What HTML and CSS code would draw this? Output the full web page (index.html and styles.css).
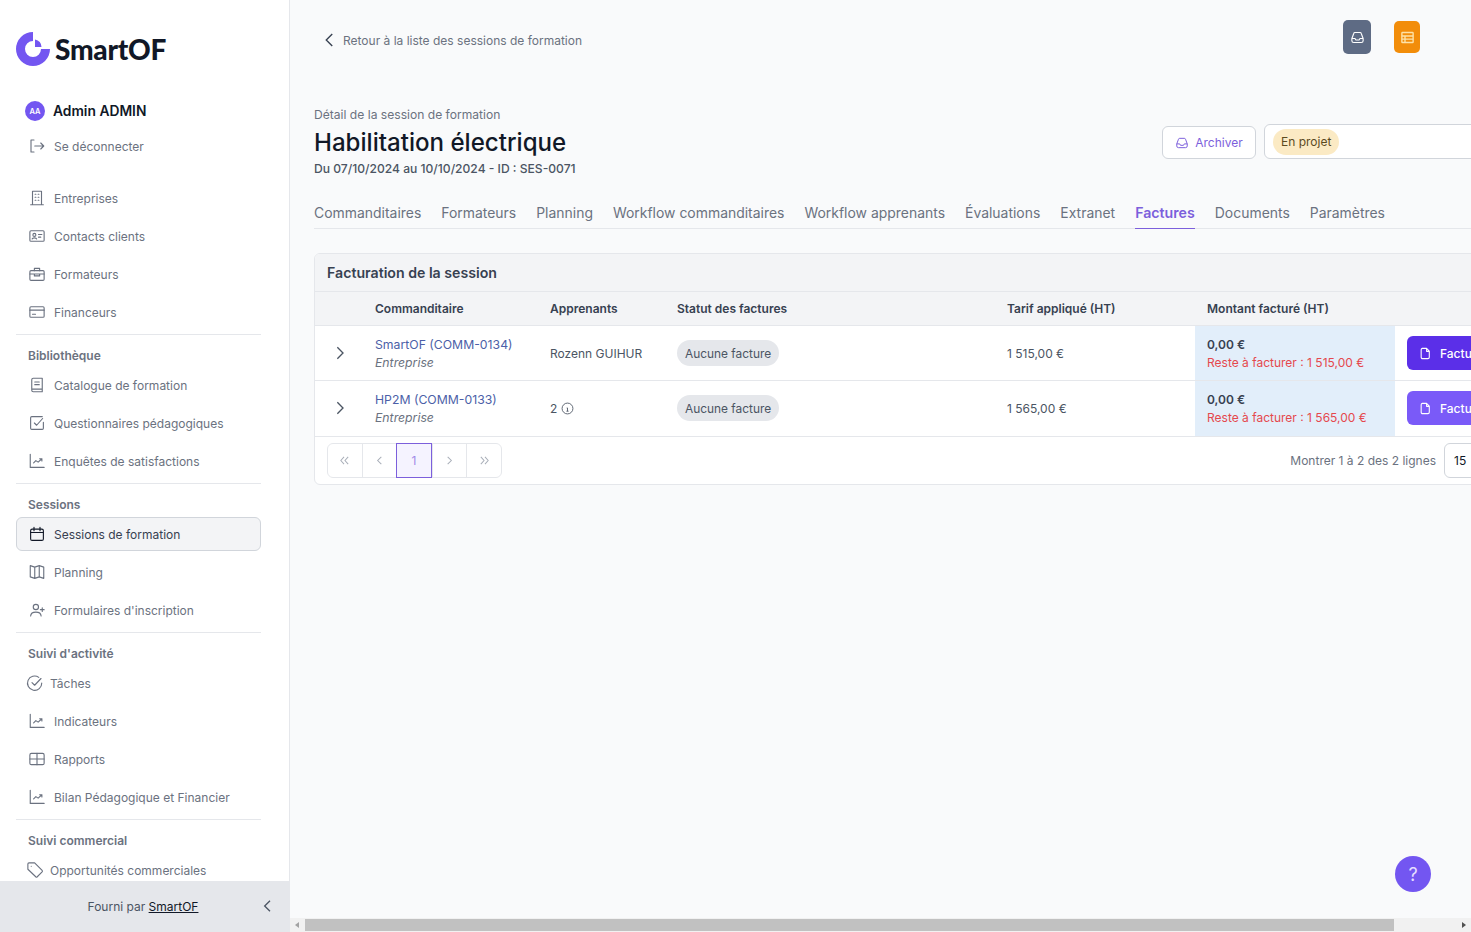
FILE: index.html
```html
<!DOCTYPE html>
<html lang="fr">
<head>
<meta charset="utf-8">
<title>Habilitation électrique</title>
<link rel="stylesheet" href="styles.css">
</head>
<body>
<aside class="sidebar">
  <div class="side-scroll">
    <div class="logo">
      <svg width="36" height="36" viewBox="0 0 36 36"><path d="M18 1a17 17 0 1 0 17 17h-9a8 8 0 1 1-8-8z" fill="#7356f1"/><path d="M20 8.500a8 8 0 0 1 6.500 7.500H20z" fill="#7356f1"/></svg>
      <span class="logo-text">SmartOF</span>
    </div>
    <div class="user"><span class="avatar">AA</span><span class="user-name">Admin ADMIN</span></div>
    <a class="item logout"><svg class="ic" viewBox="0 0 24 24"><path d="M8 4H4v16h4M9 12h12M17 8l4 4-4 4"/></svg><span>Se déconnecter</span></a>
    <nav class="group first">
      <a class="item"><svg class="ic" viewBox="0 0 24 24"><path d="M6 21V3h12v18M3.500 21h17M9.500 7h1M13.500 7h1M9.500 11h1M13.500 11h1M9.500 15h1M13.500 15h1"/></svg><span>Entreprises</span></a>
      <a class="item"><svg class="ic" viewBox="0 0 24 24"><rect x="2.500" y="5" width="19" height="14" rx="1.500"/><circle cx="8.500" cy="10.500" r="2"/><path d="M5.500 16c.5-2 5.500-2 6 0M14 10h4.500M14 13.500h3"/></svg><span>Contacts clients</span></a>
      <a class="item"><svg class="ic" viewBox="0 0 24 24"><rect x="2.500" y="7.500" width="19" height="13" rx="1.500"/><path d="M8.500 7.500V4.500h7v3M2.500 12h19M8.500 12v2.500h7V12"/></svg><span>Formateurs</span></a>
      <a class="item"><svg class="ic" viewBox="0 0 24 24"><rect x="2.500" y="5" width="19" height="14" rx="1.500"/><path d="M2.500 9.500h19M6 15h4"/></svg><span>Financeurs</span></a>
    </nav>
    <nav class="group">
      <h3 class="group-title">Bibliothèque</h3>
      <a class="item"><svg class="ic" viewBox="0 0 24 24"><path d="M5 19V5a2 2 0 0 1 2-2h12v18H7a2 2 0 0 1-2-2zM5 17.500h14M9 8h6M9 11.500h6"/></svg><span>Catalogue de formation</span></a>
      <a class="item"><svg class="ic" viewBox="0 0 24 24"><path d="M20.500 11v8a1.500 1.500 0 0 1-1.500 1.500H5A1.500 1.500 0 0 1 3.500 19V5A1.500 1.500 0 0 1 5 3.500h14M8.500 12l3 3 8-9"/></svg><span>Questionnaires pédagogiques</span></a>
      <a class="item"><svg class="ic" viewBox="0 0 24 24"><path d="M3 3v17.500h18.500M7.500 14.500l3-3 3 2 5-4.500M15.500 9h3v3"/></svg><span>Enquêtes de satisfactions</span></a>
    </nav>
    <nav class="group">
      <h3 class="group-title">Sessions</h3>
      <a class="item active"><svg class="ic dark" viewBox="0 0 24 24"><rect x="3.500" y="5.500" width="17" height="15" rx="2"/><path d="M8 3v4.500M16 3v4.500M3.500 10h17"/></svg><span>Sessions de formation</span></a>
      <a class="item"><svg class="ic" viewBox="0 0 24 24"><path d="M9 5.500 3 3.500v15l6 2 6-2 6 2v-15l-6-2zM9 5.500v15M15 3.500v15"/></svg><span>Planning</span></a>
      <a class="item"><svg class="ic" viewBox="0 0 24 24"><circle cx="10.500" cy="8" r="3.500"/><path d="M3.500 20c.5-7 13.500-7 14 0M19 9v5M16.500 11.500h5"/></svg><span>Formulaires d'inscription</span></a>
    </nav>
    <nav class="group">
      <h3 class="group-title">Suivi d'activité</h3>
      <a class="item tight"><svg class="ic" viewBox="0 0 24 24"><path d="M21 12a9.500 9.500 0 1 1-4-7.500M8 11.500l3.500 3.500L20 6"/></svg><span>Tâches</span></a>
      <a class="item"><svg class="ic" viewBox="0 0 24 24"><path d="M3 3v17.500h18.500M7.500 14.500l3-3 3 2 5-4.500M15.500 9h3v3"/></svg><span>Indicateurs</span></a>
      <a class="item"><svg class="ic" viewBox="0 0 24 24"><rect x="2.500" y="4.500" width="19" height="15" rx="2"/><path d="M2.500 12h19M12 4.500v15"/></svg><span>Rapports</span></a>
      <a class="item"><svg class="ic" viewBox="0 0 24 24"><path d="M3 3v17.500h18.500M7.500 14.500l3-3 3 2 5-4.500M15.500 9h3v3"/></svg><span>Bilan Pédagogique et Financier</span></a>
    </nav>
    <nav class="group last">
      <h3 class="group-title">Suivi commercial</h3>
      <a class="item tight"><svg class="ic" viewBox="0 0 24 24"><path d="M2.500 4a1.500 1.500 0 0 1 1.500-1.500h7.500l10 10a1.500 1.500 0 0 1 0 2l-6.500 6.500a1.500 1.500 0 0 1-2 0l-10.500-10zM7 7h.01"/></svg><span>Opportunités commerciales</span></a>
    </nav>
  </div>
  <footer class="side-foot">
    <span class="foot-text">Fourni par <u>SmartOF</u></span>
    <svg class="foot-chev" viewBox="0 0 24 24"><path d="M15 4l-8 8 8 8"/></svg>
  </footer>
</aside>

<div class="main">
  <div class="scroll-area">
    <header class="topbar">
      <a class="back"><svg class="back-chev" viewBox="0 0 24 24"><path d="M15 4l-8 8 8 8"/></svg><span>Retour à la liste des sessions de formation</span></a>
      <div class="top-icons">
        <span class="square slate"><svg viewBox="0 0 24 24"><path d="M3 13.500V17a3 3 0 0 0 3 3h12a3 3 0 0 0 3-3v-3.500L18 5.500a2 2 0 0 0-2-1.500H8a2 2 0 0 0-2 1.500zM3 13.500h5l1.500 2.500h5l1.500-2.500h5"/></svg></span>
        <span class="square orange"><svg viewBox="0 0 24 24"><rect x="3" y="4" width="18" height="16" rx="1"/><path d="M3 9.500h18M3 14.500h18M8 9.500v10.500"/></svg></span>
      </div>
    </header>
    <div class="content">
      <section class="head">
        <div class="head-left">
          <p class="eyebrow">Détail de la session de formation</p>
          <h1 class="title">Habilitation électrique</h1>
          <p class="dates">Du 07/10/2024 au 10/10/2024 - ID : SES-0071</p>
        </div>
        <div class="head-right">
          <button class="archive"><svg viewBox="0 0 24 24"><path d="M3 13.500V17a3 3 0 0 0 3 3h12a3 3 0 0 0 3-3v-3.500L18 5.500a2 2 0 0 0-2-1.500H8a2 2 0 0 0-2 1.500zM3 13.500h5l1.500 2.500h5l1.500-2.500h5"/></svg>Archiver</button>
          <div class="state"><span class="state-pill">En projet</span></div>
        </div>
      </section>
      <nav class="tabs">
        <a class="tab">Commanditaires</a><a class="tab">Formateurs</a><a class="tab">Planning</a><a class="tab">Workflow commanditaires</a><a class="tab">Workflow apprenants</a><a class="tab">Évaluations</a><a class="tab">Extranet</a><a class="tab on">Factures</a><a class="tab">Documents</a><a class="tab">Paramètres</a>
      </nav>
      <section class="card">
        <h2 class="card-title">Facturation de la session</h2>
        <table class="bill">
          <colgroup><col class="c1"><col class="c2"><col class="c3"><col class="c4"><col class="c5"><col class="c6"><col class="c7"></colgroup>
          <thead><tr><th></th><th>Commanditaire</th><th>Apprenants</th><th>Statut des factures</th><th>Tarif appliqué (HT)</th><th>Montant facturé (HT)</th><th></th></tr></thead>
          <tbody>
            <tr>
              <td class="chev-cell"><svg class="row-chev" viewBox="0 0 24 24"><path d="M8 3.500l8.500 8.500-8.500 8.500"/></svg></td>
              <td><a class="link">SmartOF (COMM-0134)</a><em class="sub">Entreprise</em></td>
              <td>Rozenn GUIHUR</td>
              <td><span class="pill">Aucune facture</span></td>
              <td>1 515,00 €</td>
              <td class="amount"><b class="zero">0,00 €</b><span class="rest">Reste à facturer : 1 515,00 €</span></td>
              <td><button class="bill-btn"><svg viewBox="0 0 24 24"><path d="M6 2.500h8l5 5V19a2.500 2.500 0 0 1-2.500 2.500h-10A2.500 2.500 0 0 1 4 19V5a2.500 2.500 0 0 1 2-2.500zM14 2.500V8h5"/></svg>Facturer</button></td>
            </tr>
            <tr>
              <td class="chev-cell"><svg class="row-chev" viewBox="0 0 24 24"><path d="M8 3.500l8.500 8.500-8.500 8.500"/></svg></td>
              <td><a class="link">HP2M (COMM-0133)</a><em class="sub">Entreprise</em></td>
              <td><span class="count">2<svg class="info" viewBox="0 0 24 24"><circle cx="12" cy="12" r="10"/><path d="M12 11v6M10 17h4M10.500 11H12M12 7h.01"/></svg></span></td>
              <td><span class="pill">Aucune facture</span></td>
              <td>1 565,00 €</td>
              <td class="amount"><b class="zero">0,00 €</b><span class="rest">Reste à facturer : 1 565,00 €</span></td>
              <td><button class="bill-btn soft"><svg viewBox="0 0 24 24"><path d="M6 2.500h8l5 5V19a2.500 2.500 0 0 1-2.500 2.500h-10A2.500 2.500 0 0 1 4 19V5a2.500 2.500 0 0 1 2-2.500zM14 2.500V8h5"/></svg>Facturer</button></td>
            </tr>
          </tbody>
        </table>
        <div class="pager-row">
          <div class="pager">
            <span class="pg"><svg viewBox="0 0 12 12"><path d="M5.500 2 2 6l3.500 4M10 2 6.500 6l3.500 4"/></svg></span>
            <span class="pg"><svg viewBox="0 0 12 12"><path d="M8 2 4 6l4 4"/></svg></span>
            <span class="pg cur">1</span>
            <span class="pg"><svg viewBox="0 0 12 12"><path d="M4 2l4 4-4 4"/></svg></span>
            <span class="pg"><svg viewBox="0 0 12 12"><path d="M2 2l3.500 4L2 10M6.500 2 10 6l-3.500 4"/></svg></span>
          </div>
          <div class="pager-right"><span class="shown">Montrer 1 à 2 des 2 lignes</span><span class="size">15</span></div>
        </div>
      </section>
    </div>
  </div>
  <button class="help">?</button>
  <div class="hbar">
    <span class="arrow left"></span>
    <span class="track"><span class="thumb"></span></span>
    <span class="arrow right"></span>
  </div>
</div>
</body>
</html>
```
FILE: styles.css
```css
* { box-sizing: border-box; }
html, body { margin: 0; height: 100%; }
body {
  display: flex;
  width: 1471px;
  height: 932px;
  overflow: hidden;
  font-family: Inter, "Noto Sans", sans-serif;
  font-size: 12px;
  color: #4b5563;
  background: #f9fafb;
}
p, h1, h2, h3 { margin: 0; }

.sidebar {
  width: 290px;
  flex: none;
  height: 932px;
  display: flex;
  flex-direction: column;
  background: #fff;
  border-right: 1px solid #e5e7eb;
}
.side-scroll { flex: 1; overflow: hidden; padding: 31px 28px 0 16px; }
.logo { display: flex; align-items: center; gap: 4px; height: 36px; margin-left: -1px; }
.logo-text { font-family: Lato, Inter, sans-serif; font-size: 28px; font-weight: 900; color: #111827; letter-spacing: -0.25px; }
.user { display: flex; align-items: center; gap: 8px; margin: 34px 0 0 9px; height: 20px; }
.avatar { width: 20px; height: 20px; border-radius: 50%; background: #7356f1; color: #fff; font-size: 7.500px; font-weight: 600; display: flex; align-items: center; justify-content: center; }
.user-name { font-size: 13.800px; font-weight: 600; color: #111827; }
.item { display: flex; align-items: center; gap: 8px; height: 34px; margin-bottom: 4px; padding-left: 11px; color: #6b7280; border: 1px solid transparent; border-radius: 6px; }
.logout { margin-top: 8px; }
.ic { width: 18px; height: 18px; flex: none; fill: none; stroke: #6b7280; stroke-width: 1.500; stroke-linecap: round; stroke-linejoin: round; }
.ic.dark { stroke: #111827; }
.item.active { background: #f3f4f6; border-color: #d1d5db; color: #374151; }
.item.tight { padding-left: 9px; gap: 6px; }
.group { border-top: 1px solid #e5e7eb; padding: 12px 0 1px; }
.group.first { border-top: 0; margin-top: 18px; padding-top: 0; }
.group-title { font-size: 12px; font-weight: 600; color: #6b7280; margin: 0 0 4px 12px; line-height: 17px; }
.group:last-child .item { margin-bottom: 0; }

.side-foot { flex: none; height: 51px; background: #e5e7eb; display: flex; align-items: center; justify-content: center; position: relative; padding-right: 3px; color: #4b5563; }
.foot-text u { color: #111827; }
.foot-chev { position: absolute; right: 13px; top: 17px; width: 16px; height: 16px; fill: none; stroke: #4b5563; stroke-width: 2; }

.main { flex: 1; min-width: 0; height: 932px; display: flex; flex-direction: column; position: relative; }
.scroll-area { flex: 1; min-height: 0; overflow: hidden; }
.topbar { height: 60px; padding: 20px 51px 0 31px; display: flex; justify-content: space-between; align-items: flex-start; }
.back { display: flex; align-items: center; gap: 4px; height: 40px; color: #6b7280; }
.back-chev { width: 18px; height: 18px; fill: none; stroke: #374151; stroke-width: 1.800; }
.top-icons { display: flex; gap: 23px; align-items: flex-start; }
.square { display: flex; align-items: center; justify-content: center; height: 34px; border-radius: 5px; }
.square svg { width: 15px; height: 15px; fill: none; stroke: #fff; stroke-width: 1.800; stroke-linejoin: round; }
.slate { width: 28px; background: #5e6b84; }
.orange { width: 26px; height: 32px; margin-top: 1px; background: #f28d0a; }
.orange svg { stroke: #fde2a8; stroke-width: 2.200; }

.content { width: 1205px; margin-left: 24px; padding-top: 47px; }
.head { display: flex; justify-content: space-between; align-items: flex-start; height: 70px; }
.eyebrow { font-size: 12.100px; line-height: 15px; color: #6b7280; }
.title { font-size: 24.100px; font-weight: 500; color: #111827; line-height: 30px; margin-top: 6px; }
.dates { font-size: 12.100px; font-weight: 500; color: #4b5563; line-height: 15px; margin-top: 3px; }
.head-right { display: flex; gap: 8px; padding-top: 17px; align-items: flex-end; }
.archive { height: 33px; width: 94px; padding: 0; display: flex; align-items: center; justify-content: center; gap: 6px; background: #fff; border: 1px solid #d1d5db; border-radius: 6px; color: #7c5fdc; font: 12px Inter, sans-serif; }
.archive svg { width: 14px; height: 14px; fill: none; stroke: #7c5fdc; stroke-width: 1.700; stroke-linejoin: round; }
.state { width: 255px; height: 35px; display: flex; align-items: center; padding: 0 8px; background: #fff; border: 1px solid #d1d5db; border-radius: 6px; }
.state-pill { height: 26px; display: flex; align-items: center; padding: 0 8px; border-radius: 13px; background: #fbeac4; color: #5b4a1f; }

.tabs { display: flex; gap: 20px; margin-top: 22px; border-bottom: 1px solid #e5e7eb; height: 30px; }
.tab { font-size: 13.950px; color: #6b7280; height: 30px; line-height: 28px; }
.tab.on { font-size: 14.200px; color: #7c5fdc; font-weight: 600; border-bottom: 1px solid #7c5fdc; }

.card { margin-top: 24px; border: 1px solid #e5e7eb; border-radius: 6px; background: #fff; overflow: hidden; }
.card-title { height: 37px; display: flex; align-items: center; padding-left: 12px; background: #f3f4f6; font-size: 14.150px; font-weight: 600; color: #374151; }
.bill { width: 100%; table-layout: fixed; border-collapse: collapse; }
.c1 { width: 48px; } .c2 { width: 175px; } .c3 { width: 127px; } .c4 { width: 330px; } .c5 { width: 200px; } .c6 { width: 200px; } .c7 { width: auto; }
.bill th { height: 34px; padding: 0 12px; text-align: left; background: #f3f4f6; border-top: 1px solid #e5e7eb; font-size: 12px; font-weight: 600; color: #374151; }
.bill td { height: 55px; padding: 0 12px; border-top: 1px solid #e5e7eb; color: #4b5563; }
.chev-cell { padding: 0 !important; text-align: center; }
.row-chev { display: block; width: 16px; height: 16px; margin-left: 17px; fill: none; stroke: #4b5563; stroke-width: 2; }
.link { display: block; margin-top: 2px; font-size: 12.250px; color: #4c5fa8; line-height: 18px; }
.sub { display: block; font-size: 12.250px; color: #6b7280; line-height: 18px; }
.count { display: flex; align-items: center; gap: 4px; }
.info { width: 13px; height: 13px; fill: none; stroke: #4b5563; stroke-width: 1.600; }
.pill { display: inline-flex; align-items: center; height: 26px; padding: 0 8px; border-radius: 13px; background: #e5e7eb; color: #4b5563; font-size: 11.900px; }
.bill td.amount { background: #e2eefa; }
.zero { display: block; margin-top: 2px; font-weight: 600; color: #374151; line-height: 18px; }
.rest { display: block; color: #e5484d; line-height: 18px; }
.bill-btn { width: 110px; height: 34px; display: flex; align-items: center; gap: 8px; padding: 0 12px; border: 0; border-radius: 6px; background: #5b2fe8; color: #fff; font: 500 12px Inter, sans-serif; }
.bill-btn.soft { background: #7a5af8; }
.bill-btn svg { width: 13px; height: 13px; fill: none; stroke: #fff; stroke-width: 2; stroke-linejoin: round; }

.pager-row { border-top: 1px solid #e5e7eb; height: 48px; padding: 6px 12px 0; display: flex; justify-content: space-between; align-items: flex-start; }
.pager { display: flex; width: 175px; height: 35px; border: 1px solid #e5e7eb; border-radius: 6px; }
.pg { flex: 1; display: flex; align-items: center; justify-content: center; border-left: 1px solid #e5e7eb; }
.pg:first-child { border-left: 0; }
.pg svg { width: 11px; height: 11px; fill: none; stroke: #a8aeb8; stroke-width: 1.100; }
.pg.cur { margin: -1px 0; border: 1px solid #7c5fdc; background: #f5f3ff; color: #9f8ae8; }
.pager-right { display: flex; align-items: center; gap: 8px; height: 35px; }
.shown { color: #6b7280; }
.size { width: 62px; height: 35px; display: flex; align-items: center; padding-left: 9px; background: #fff; border: 1px solid #d1d5db; border-radius: 6px; color: #111827; }

.help { position: absolute; left: 1105px; top: 856px; width: 36px; height: 36px; border: 0; border-radius: 50%; background: #7356f1; color: #e5dfff; font: 18px Inter, sans-serif; padding: 0; }
.hbar { flex: none; height: 14px; display: flex; align-items: center; background: #f1f1f1; }
.arrow { width: 14px; height: 14px; flex: none; display: flex; align-items: center; justify-content: center; }
.arrow.left::before { content: ""; border: 3.500px solid transparent; border-right: 4px solid #a3a3a3; border-left: 0; }
.arrow.right::before { content: ""; border: 3.500px solid transparent; border-left: 4px solid #505050; border-right: 0; }
.track { flex: 1; height: 14px; padding: 1px 0; display: block; }
.thumb { display: block; width: 1089px; height: 12px; margin-left: 1px; background: #c1c1c1; }
```
